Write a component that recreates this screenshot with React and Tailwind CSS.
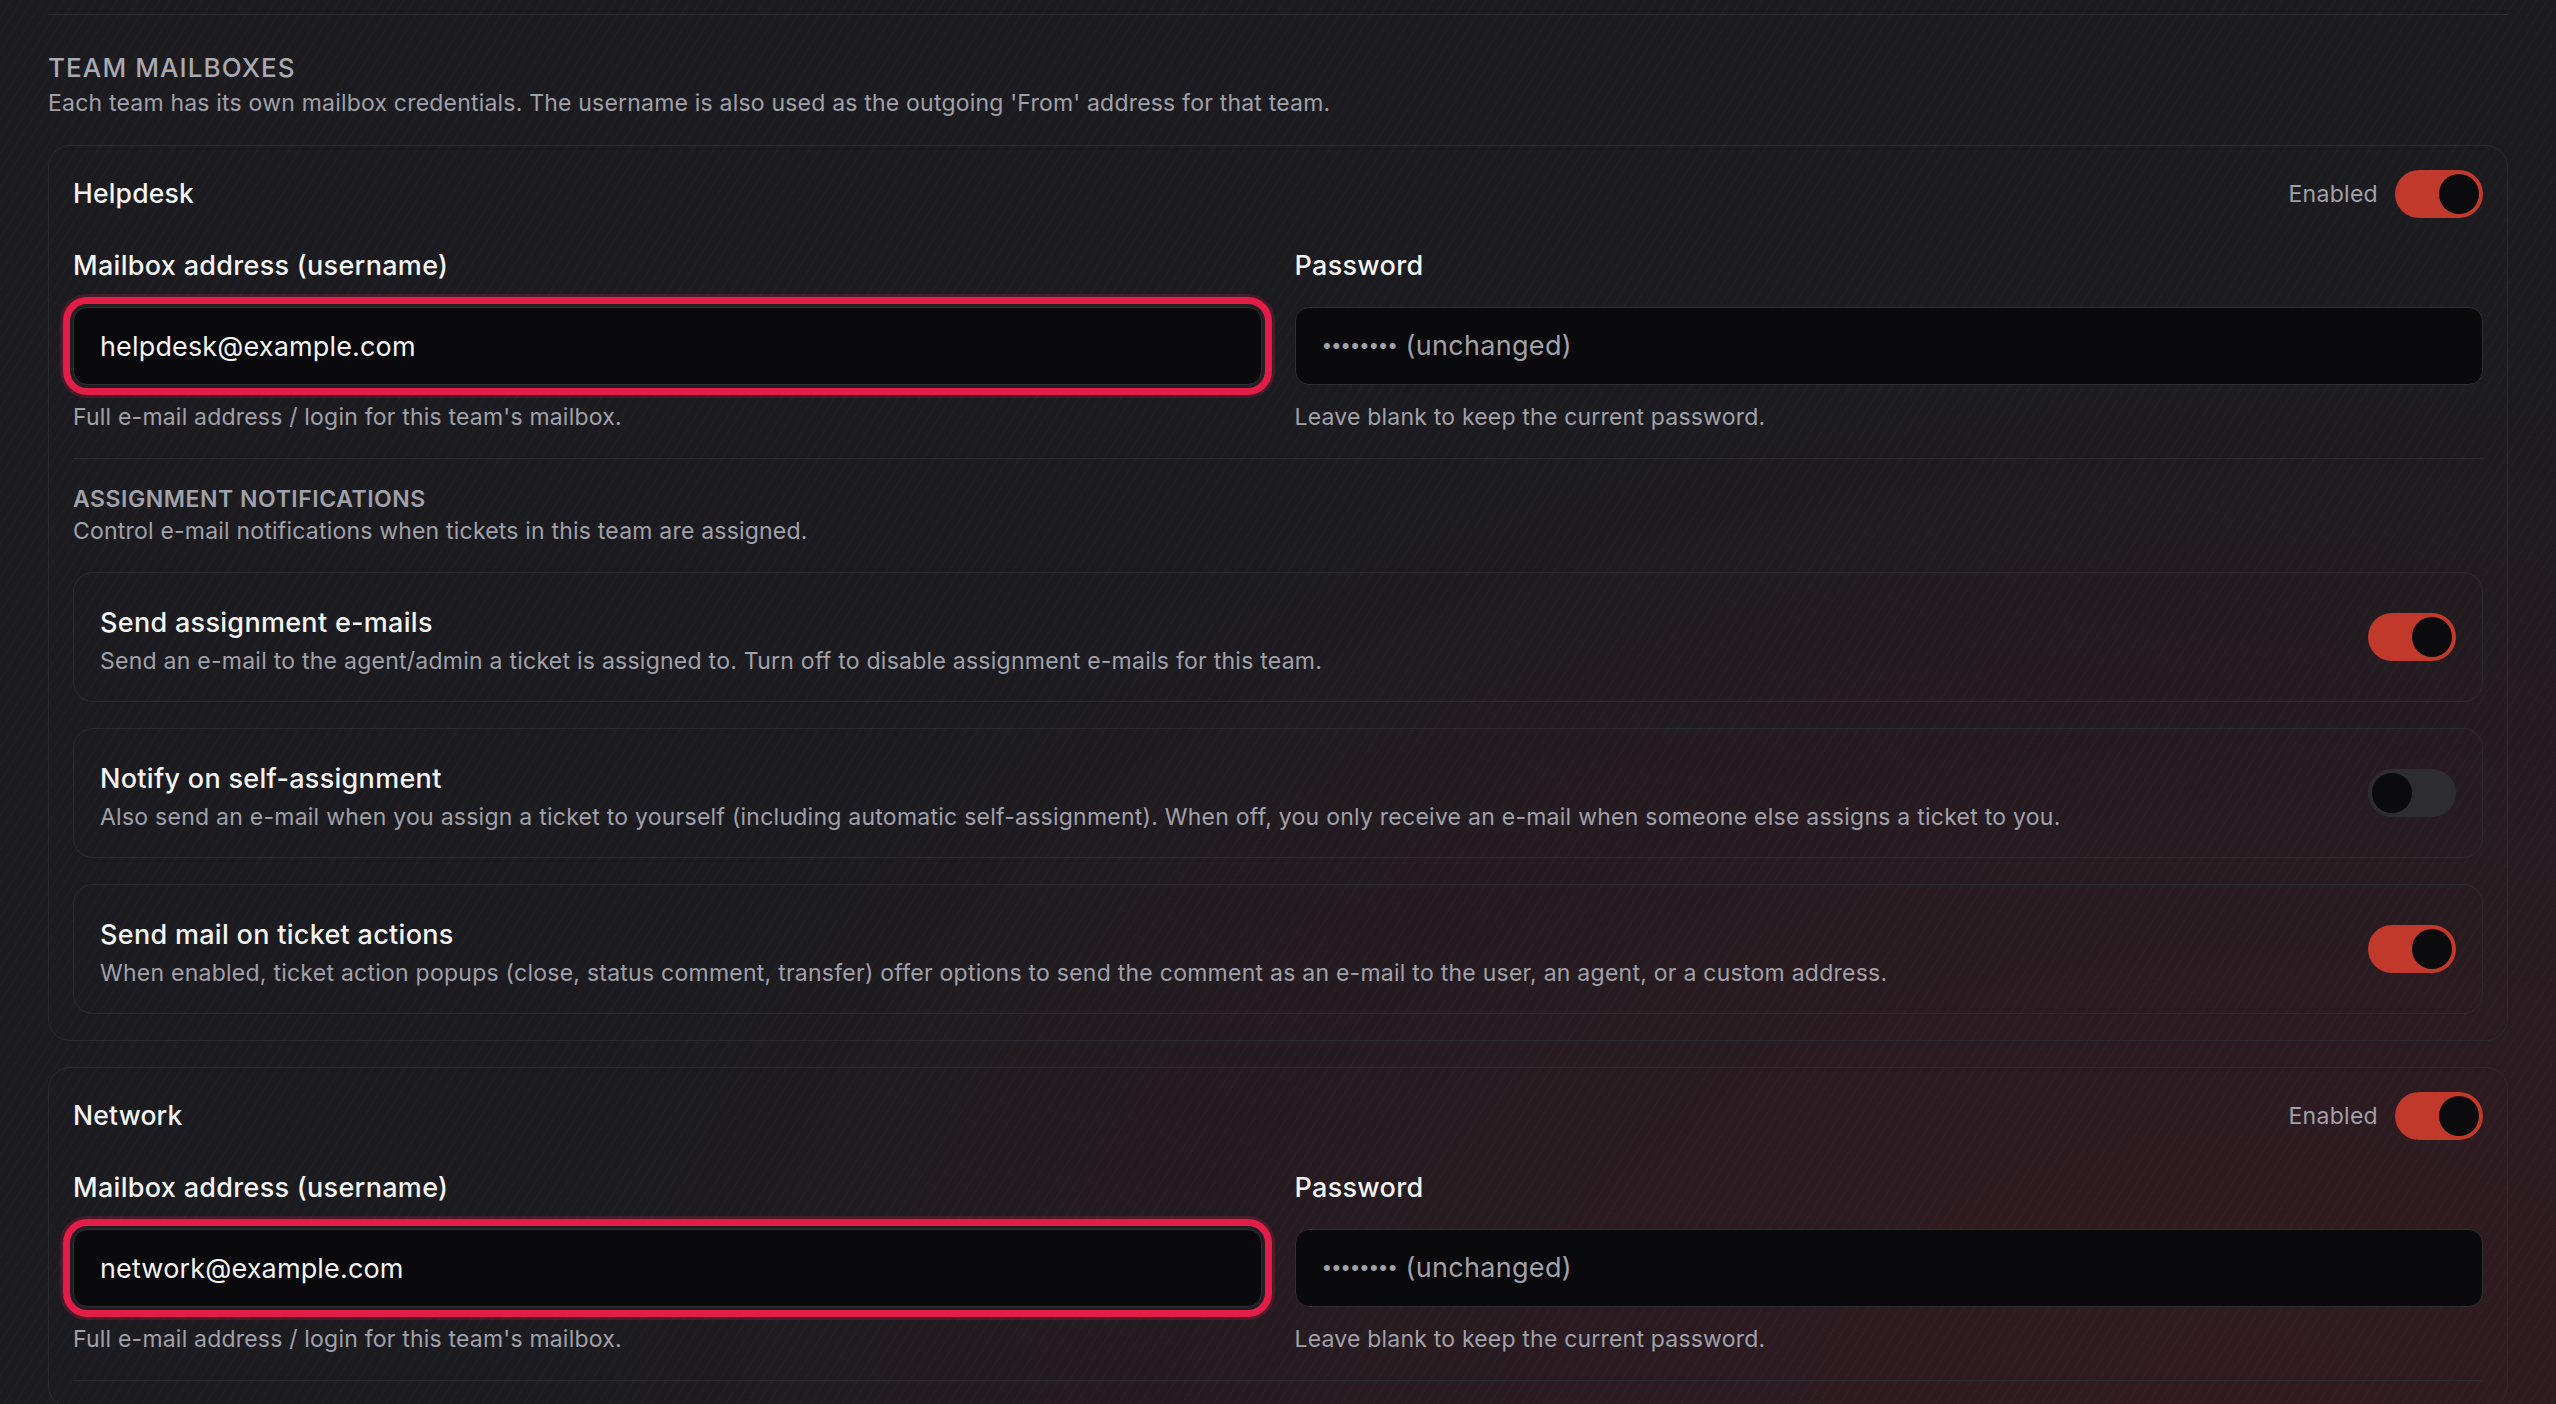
import React from 'react'

function Toggle({ on }) {
  return (
    <div
      className={`flex h-[48px] w-[88px] shrink-0 items-center rounded-full p-[4px] ${
        on ? 'justify-end bg-[#c0392b]' : 'justify-start bg-[#2c2c31]'
      }`}
    >
      <div className="h-[40px] w-[40px] rounded-full bg-[#0b0b0d]" />
    </div>
  )
}

function NotifyRow({ title, text, on }) {
  return (
    <div className="flex h-[130px] items-center justify-between gap-[40px] rounded-[20px] border border-[#2a2a30] px-[26px]">
      <div className="pt-[7px]">
        <div className="text-[27px] font-medium leading-[36px] tracking-[0.3px] text-[#f4f4f5]">{title}</div>
        <div className="mt-[4px] text-[23px] leading-[32px] tracking-[0.25px] text-[#a1a1aa]">{text}</div>
      </div>
      <Toggle on={on} />
    </div>
  )
}

function TeamCard({ name, email, notifications }) {
  return (
    <div className="mt-[26px] rounded-[22px] border border-[#2a2a30] px-[24px] pt-[24px] pb-[26px]">
      <div className="flex h-[48px] items-center justify-between">
        <span className="text-[26.5px] font-medium tracking-[0.2px] text-[#f4f4f5]">{name}</span>
        <div className="flex items-center gap-[17px]">
          <span className="text-[23px] tracking-[0.3px] text-[#a1a1aa]">Enabled</span>
          <Toggle on />
        </div>
      </div>

      <div className="mt-[32px] grid grid-cols-2 gap-x-[33px]">
        <div>
          <label className="block text-[27px] font-medium leading-[32px] tracking-[0.3px] text-[#f4f4f5]">
            Mailbox address (username)
          </label>
          <input
            readOnly
            defaultValue={email}
            className="mt-[25px] block h-[78px] w-full rounded-[14px] border border-[#2e2e34] bg-[#0a0a0c] px-[26px] text-[27px] tracking-[0.15px] text-[#f4f4f5] outline-none ring-[7px] ring-[#e11d48] ring-offset-[3px] ring-offset-[#1f1f24] shadow-[0_0_0_13px_rgba(225,29,72,0.22)]"
          />
          <p className="mt-[16px] text-[23px] leading-[32px] tracking-[0.2px] text-[#a1a1aa]">
            Full e-mail address / login for this team's mailbox.
          </p>
        </div>
        <div>
          <label className="block text-[27px] font-medium leading-[32px] tracking-[0.3px] text-[#f4f4f5]">Password</label>
          <div className="mt-[25px] flex h-[78px] w-full items-center rounded-[14px] border border-[#2e2e34] bg-[#0a0a0c] px-[26px] text-[27px] tracking-[0.3px] text-[#a1a1aa]">
            <span className="mr-[9px] text-[19px] tracking-[-1.3px]">••••••••</span>
            <span>(unchanged)</span>
          </div>
          <p className="mt-[16px] text-[23px] leading-[32px] tracking-[0.2px] text-[#a1a1aa]">
            Leave blank to keep the current password.
          </p>
        </div>
      </div>

      <div className="mt-[25px] border-t border-[#2a2a30]" />

      {notifications && (
        <>
          <div className="mt-[25px] text-[23px] font-semibold uppercase leading-[31px] tracking-[0.55px] text-[#a1a1aa]">
            Assignment notifications
          </div>
          <div className="text-[23px] leading-[32px] tracking-[0.2px] text-[#a1a1aa]">
            Control e-mail notifications when tickets in this team are assigned.
          </div>

          <div className="mt-[25px] flex flex-col gap-[26px]">
            <NotifyRow
              on
              title="Send assignment e-mails"
              text="Send an e-mail to the agent/admin a ticket is assigned to. Turn off to disable assignment e-mails for this team."
            />
            <NotifyRow
              on={false}
              title="Notify on self-assignment"
              text="Also send an e-mail when you assign a ticket to yourself (including automatic self-assignment). When off, you only receive an e-mail when someone else assigns a ticket to you."
            />
            <NotifyRow
              on
              title="Send mail on ticket actions"
              text="When enabled, ticket action popups (close, status comment, transfer) offer options to send the comment as an e-mail to the user, an agent, or a custom address."
            />
          </div>
        </>
      )}
    </div>
  )
}

export default function App() {
  return (
    <div className="h-[1404px] overflow-hidden bg-[#1c1c20] font-[Inter,'Liberation_Sans',sans-serif]">
      <div className="h-full bg-[radial-gradient(ellipse_at_88%_100%,rgba(140,24,32,0.2),transparent_55%)]">
        <div className="h-full bg-[repeating-linear-gradient(122deg,rgba(255,255,255,0.018)_0px,rgba(255,255,255,0.018)_1px,transparent_1px,transparent_9px)] px-[48px]">
          <div className="h-[15px] border-b border-[#2e2e34]" />

          <h2 className="mt-[34px] text-[26px] font-medium uppercase leading-[38px] tracking-[1.1px] text-[#a9a9b2]">
            Team mailboxes
          </h2>
          <p className="text-[23px] leading-[32px] tracking-[0.2px] text-[#a1a1aa]">
            Each team has its own mailbox credentials. The username is also used as the outgoing 'From' address for that team.
          </p>

          <TeamCard name="Helpdesk" email="helpdesk@example.com" notifications />
          <TeamCard name="Network" email="network@example.com" />
        </div>
      </div>
    </div>
  )
}
